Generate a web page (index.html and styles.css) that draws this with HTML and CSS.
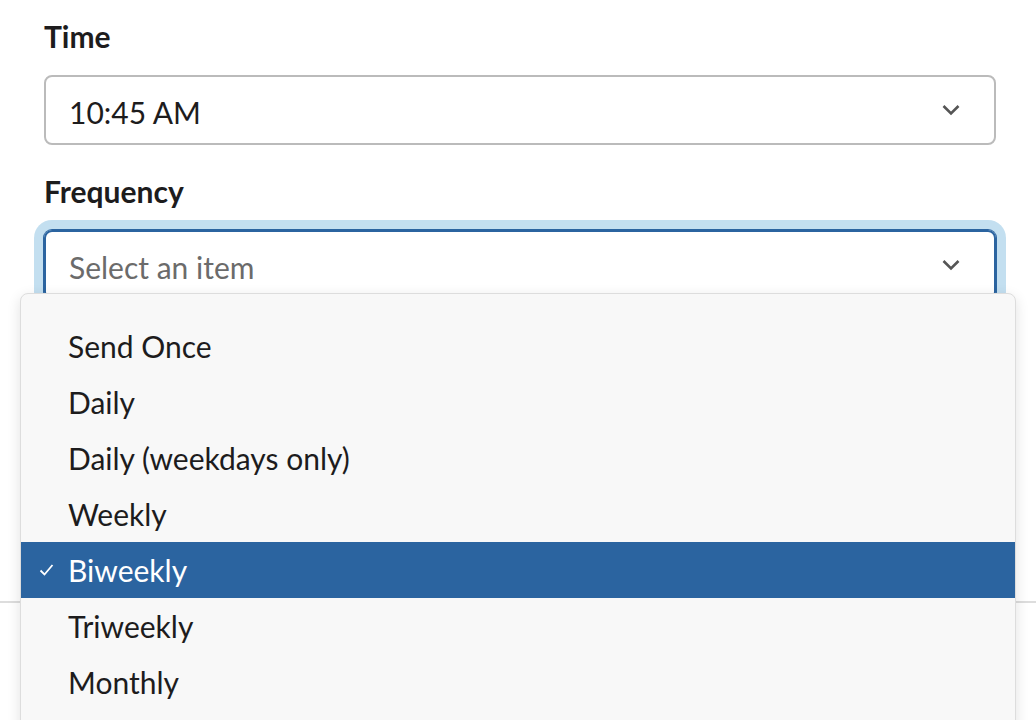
FILE: index.html
```html
<!DOCTYPE html>
<html lang="en">
<head>
  <meta charset="UTF-8" />
  <meta name="viewport" content="width=device-width, initial-scale=1" />
  <title>Schedule message</title>
  <link rel="stylesheet" href="styles.css">
</head>
<body>
<div class="modal">
  <div class="fields">
    <label class="field-label">Time</label>
    <div class="select">
      <span class="select-value">10:45 AM</span>
      <svg class="chevron" width="18" height="12" viewBox="0 0 18 12"><path d="M1.5 2 L9 9.5 L16.5 2" fill="none" stroke="#555" stroke-width="2.6"/></svg>
    </div>

    <label class="field-label">Frequency</label>
    <div class="select focused">
      <span class="select-placeholder">Select an item</span>
      <svg class="chevron" width="18" height="12" viewBox="0 0 18 12"><path d="M1.5 2 L9 9.5 L16.5 2" fill="none" stroke="#555" stroke-width="2.6"/></svg>
    </div>
  </div>

  <div class="footer"></div>

  <!-- open menu for the frequency select -->
  <ul class="menu">
    <li>Send Once</li>
    <li>Daily</li>
    <li>Daily (weekdays only)</li>
    <li>Weekly</li>
    <li class="selected">
      <svg class="check" width="15" height="14" viewBox="0 0 15 14"><path d="M1.5 7.5 L5.5 11.5 L13.5 2" fill="none" stroke="#fff" stroke-width="1.8"/></svg>
      Biweekly
    </li>
    <li>Triweekly</li>
    <li>Monthly</li>
  </ul>
</div>
</body>
</html>
```

FILE: styles.css
```css
body {
  margin: 0;
  background: #fff;
  font-family: Lato, "Noto Sans", sans-serif;
  color: #1d1c1d;
  overflow: hidden;
}
.modal {
  position: relative;
  height: 720px;
  overflow: hidden;
}
.fields {
  padding: 18px 40px 273px 44px;
}
.field-label {
  display: block;
  font-size: 30px;
  line-height: 36px;
  font-weight: 700;
  margin-bottom: 21px;
}
.select {
  height: 70px;
  box-sizing: border-box;
  border: 2px solid #bbbbbb;
  border-radius: 8px;
  padding: 0 34px 0 23px;
  display: flex;
  align-items: center;
  justify-content: space-between;
  font-size: 30px;
  margin-bottom: 28px;
}
.select-value,
.select-placeholder {
  padding-top: 4px;
}
.select.focused {
  border-color: #2b64a0;
  box-shadow: 0 0 0 1px #2b64a0, 0 0 0 10px #c3dff0;
}
.select-placeholder {
  color: #6b6b6b;
}
.chevron {
  display: block;
}
.footer {
  border-top: 2px solid #dddddd;
}
.menu {
  position: absolute;
  top: 293px;
  left: 20px;
  width: 996px;
  height: 500px;
  box-sizing: border-box;
  margin: 0;
  padding: 24px 0;
  list-style: none;
  background: #f8f8f8;
  border: 1px solid #dddddd;
  border-radius: 8px;
  box-shadow: 0 4px 14px rgba(0, 0, 0, 0.12);
}
.menu li {
  position: relative;
  height: 56px;
  line-height: 56px;
  padding-left: 47px;
  font-size: 30px;
}
.menu li.selected {
  background: #2b64a0;
  color: #fff;
}
.check {
  position: absolute;
  left: 18px;
  top: 21px;
}
```
